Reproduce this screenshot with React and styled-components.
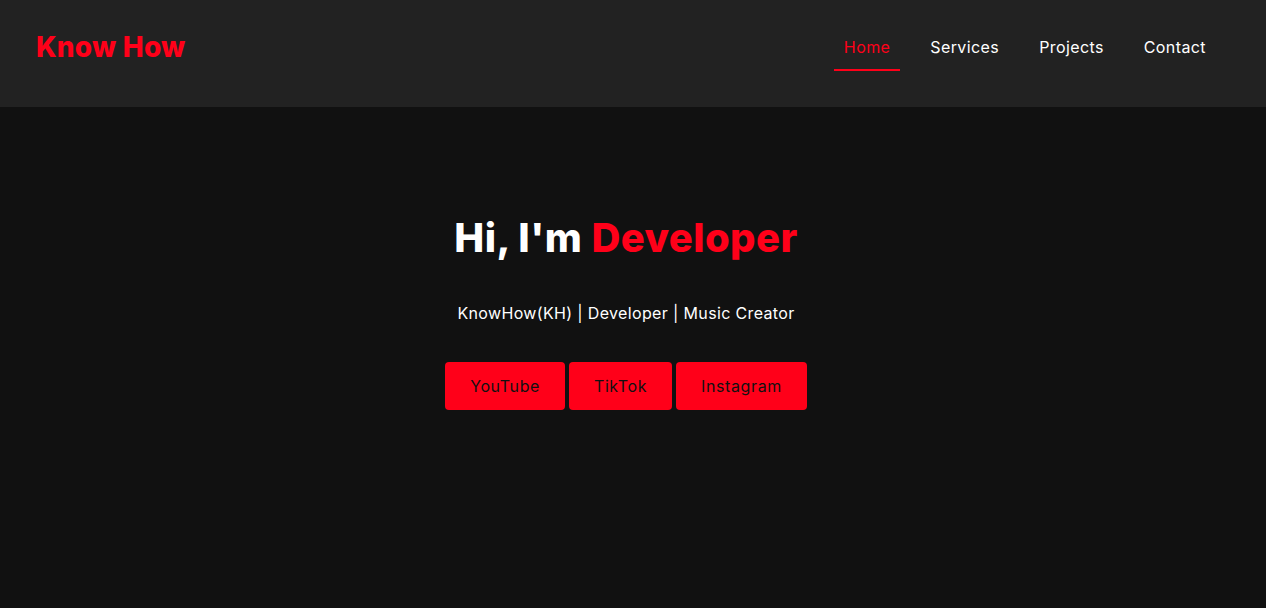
import React from 'react'
import styled, { createGlobalStyle } from 'styled-components'

const GlobalStyle = createGlobalStyle`
  html, body {
    margin: 0;
    padding: 0;
    background: #111111;
  }
  body {
    font-family: Inter, "Open Sans", Arial, sans-serif;
    color: #ffffff;
  }
  * {
    box-sizing: border-box;
  }
`

const red = '#ff0019'

const Page = styled.div`
  min-height: 608px;
  background: #111111;
`

const Header = styled.header`
  height: 107px;
  background: #222222;
  display: flex;
  align-items: flex-start;
  justify-content: space-between;
  padding: 25px 50px 0 36px;
`

const Logo = styled.a`
  font-size: 28px;
  line-height: 44px;
  font-weight: 800;
  color: ${red};
  text-decoration: none;
  letter-spacing: 0.2px;
`

const Nav = styled.nav`
  display: flex;
  gap: 20px;
`

const NavLink = styled.a`
  display: block;
  padding: 10px 10px 10px;
  font-size: 16px;
  line-height: 24px;
  font-weight: 400;
  letter-spacing: 0.4px;
  color: ${(props) => (props.$active ? red : '#ffffff')};
  border-bottom: 2px solid ${(props) => (props.$active ? red : 'transparent')};
  text-decoration: none;
  cursor: pointer;
`

const Hero = styled.section`
  display: flex;
  flex-direction: column;
  align-items: center;
  padding: 107px 14px 0 0;
`

const Title = styled.h1`
  margin: 0 0 39px;
  font-size: 40px;
  line-height: 48px;
  font-weight: 800;
  letter-spacing: 0.4px;
  color: #ffffff;
`

const Accent = styled.span`
  color: ${red};
`

const Subtitle = styled.p`
  margin: 0 0 37px;
  font-size: 16px;
  line-height: 24px;
  font-weight: 400;
  letter-spacing: 0.35px;
  color: #ffffff;
`

const Buttons = styled.div`
  display: flex;
  gap: 4px;
`

const Button = styled.a`
  display: block;
  height: 48px;
  padding: 0 25px;
  border-radius: 4px;
  background: ${red};
  color: #111111;
  font-size: 16px;
  line-height: 48px;
  font-weight: 400;
  letter-spacing: 0.6px;
  text-decoration: none;
  cursor: pointer;
`

const links = ['Home', 'Services', 'Projects', 'Contact']
const socials = ['YouTube', 'TikTok', 'Instagram']

export default function App() {
  return (
    <Page>
      <GlobalStyle />
      <Header>
        <Logo>Know How</Logo>
        <Nav>
          {links.map((l, i) => (
            <NavLink key={l} $active={i === 0}>
              {l}
            </NavLink>
          ))}
        </Nav>
      </Header>
      <Hero>
        <Title>
          Hi, I'm <Accent>Developer</Accent>
        </Title>
        <Subtitle>KnowHow(KH) | Developer | Music Creator</Subtitle>
        <Buttons>
          {socials.map((s) => (
            <Button key={s}>{s}</Button>
          ))}
        </Buttons>
      </Hero>
    </Page>
  )
}
